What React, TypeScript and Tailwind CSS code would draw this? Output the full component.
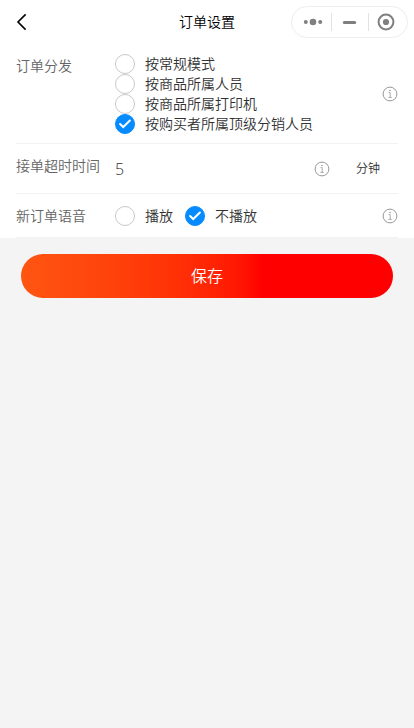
import { useState } from 'react';
import type { ReactNode } from 'react';

const DISPATCH_MODES = ['按常规模式', '按商品所属人员', '按商品所属打印机', '按购买者所属顶级分销人员'];
const VOICE_OPTIONS = ['播放', '不播放'];

function InfoButton({ label }: { label: string }) {
  return (
    <button type="button" aria-label={label} className="shrink-0">
      <svg width="16" height="16" viewBox="0 0 16 16" fill="none" stroke="#969799">
        <circle cx="8" cy="8" r="6.9" />
        <path d="M6.6 6.6H8.2V11.3M6.4 11.4H9.8" strokeWidth="0.8" />
        <circle cx="8" cy="4.5" r="0.8" fill="#969799" stroke="none" />
      </svg>
    </button>
  );
}

type RadioProps = {
  name: string;
  label: string;
  checked: boolean;
  onChange: () => void;
};

function Radio({ name, label, checked, onChange }: RadioProps) {
  return (
    <label className="flex h-5 items-center gap-2.5 text-sm leading-5 text-[#323233]">
      <span className="grid size-5 shrink-0 place-items-center">
        <input
          type="radio"
          name={name}
          checked={checked}
          onChange={onChange}
          className="col-start-1 row-start-1 size-5 appearance-none rounded-full border border-[#c8c9cc] bg-white checked:border-[#068bff] checked:bg-[#068bff]"
        />
        {checked && (
          <svg
            className="pointer-events-none col-start-1 row-start-1"
            width="20"
            height="20"
            viewBox="0 0 20 20"
            fill="none"
            stroke="#fff"
            strokeWidth="2"
            strokeLinecap="round"
          >
            <path d="M5.1 10L8.2 13L14.9 6.5" />
          </svg>
        )}
      </span>
      {label}
    </label>
  );
}

function Field({ label, htmlFor, children }: { label: string; htmlFor?: string; children: ReactNode }) {
  const labelClass = 'mr-3 w-[87px] shrink-0 self-start text-sm leading-6 text-[#646566]';
  return (
    <div className="mx-4 flex items-center border-b border-[#f2f2f2] pt-2.5 pb-[9px]">
      {htmlFor ? (
        <label htmlFor={htmlFor} className={labelClass}>{label}</label>
      ) : (
        <span className={labelClass}>{label}</span>
      )}
      {children}
    </div>
  );
}

export default function App() {
  const [mode, setMode] = useState(DISPATCH_MODES[3]);
  const [timeout, setTimeoutMinutes] = useState('5');
  const [voice, setVoice] = useState(VOICE_OPTIONS[1]);

  return (
    <div className="min-h-screen bg-[#f4f4f4] font-['Open_Sans','Noto_Sans_CJK_SC',sans-serif] font-[350]">
      {/* Nav bar */}
      <header className="grid h-11 grid-cols-[1fr_auto_1fr] items-center bg-white">
        <button type="button" aria-label="返回" className="ml-3 justify-self-start">
          <svg width="20" height="20" viewBox="0 0 20 20" fill="none" stroke="#000" strokeWidth="1.6">
            <path d="M13.6 2.4L6 10L13.6 17.6" />
          </svg>
        </button>
        <h1 className="text-sm leading-5 font-[350] text-black">订单设置</h1>

        {/* Mini program capsule */}
        <div className="mr-1.5 flex h-8 w-[117px] items-center justify-self-end rounded-full border border-[#eeeeee] text-[#7f7f7f]">
          <button type="button" aria-label="更多" className="flex flex-1 justify-center pl-1">
            <svg width="20" height="20" viewBox="0 0 20 20" fill="currentColor">
              <circle cx="2.8" cy="10" r="2" />
              <circle cx="10" cy="10" r="3.3" />
              <circle cx="17.2" cy="10" r="2" />
            </svg>
          </button>
          <span className="h-[18px] w-px bg-[#e2e2e2]" />
          <button type="button" aria-label="最小化" className="flex w-9 justify-center">
            <svg width="20" height="20" viewBox="0 0 20 20" stroke="currentColor" strokeWidth="3" strokeLinecap="round">
              <path d="M4.3 10.5H14.7" />
            </svg>
          </button>
          <span className="h-[18px] w-px bg-[#e2e2e2]" />
          <button type="button" aria-label="关闭" className="flex flex-1 justify-center pr-1">
            <svg width="20" height="20" viewBox="0 0 20 20">
              <circle cx="10" cy="10" r="7.4" fill="none" stroke="currentColor" strokeWidth="2" />
              <circle cx="10" cy="10" r="3.1" fill="currentColor" />
            </svg>
          </button>
        </div>
      </header>

      <main>
        <div className="bg-white">
          <Field label="订单分发">
            <div role="radiogroup" aria-label="订单分发" className="flex-1">
              {DISPATCH_MODES.map((item) => (
                <Radio key={item} name="mode" label={item} checked={mode === item} onChange={() => setMode(item)} />
              ))}
            </div>
            <InfoButton label="订单分发说明" />
          </Field>

          <Field label="接单超时时间" htmlFor="timeout">
            <input
              id="timeout"
              type="text"
              inputMode="numeric"
              value={timeout}
              onChange={(e) => setTimeoutMinutes(e.target.value)}
              className="h-[30px] min-w-0 flex-1 bg-transparent text-base text-[#323233] outline-none"
            />
            <InfoButton label="接单超时时间说明" />
            <span className="w-[68px] pr-[18px] text-right text-xs text-[#323233]">分钟</span>
          </Field>

          <Field label="新订单语音">
            <div role="radiogroup" aria-label="新订单语音" className="flex flex-1 gap-3">
              {VOICE_OPTIONS.map((item) => (
                <Radio key={item} name="voice" label={item} checked={voice === item} onChange={() => setVoice(item)} />
              ))}
            </div>
            <InfoButton label="新订单语音说明" />
          </Field>
        </div>

        <div className="px-[21px] pt-4">
          <button
            type="button"
            className="h-11 w-full rounded-full bg-linear-to-r from-[#ff5511] to-[#ff0000] to-65% text-base text-white"
          >
            保存
          </button>
        </div>
      </main>
    </div>
  );
}
